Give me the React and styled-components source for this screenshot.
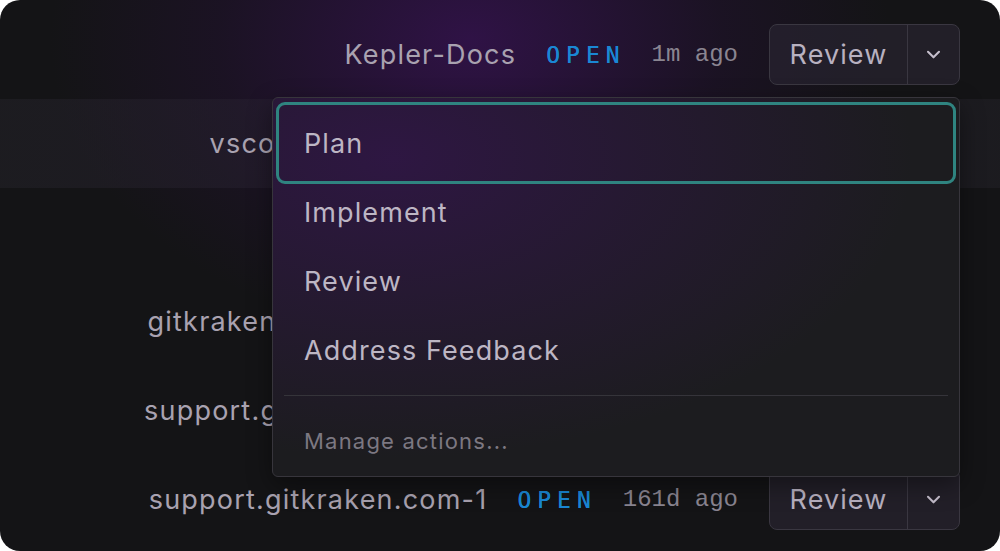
import styled, { createGlobalStyle } from 'styled-components';

const GlobalStyle = createGlobalStyle`
  html, body {
    margin: 0;
    padding: 0;
    background: #ffffff;
  }
  * {
    box-sizing: border-box;
  }
`;

const rows = [
  { name: 'Kepler-Docs', status: 'OPEN', age: '1m ago' },
  { name: 'vscode-gitlens-extras', status: 'OPEN', age: '2h ago', active: true },
  { name: 'gk-cli', status: 'OPEN', age: '5d ago' },
  { name: 'gitkraken-desktop-release', status: 'OPEN', age: '8d ago' },
  { name: 'support.gitkraken.com-2', status: 'OPEN', age: '158d ago' },
  { name: 'support.gitkraken.com-1', status: 'OPEN', age: '161d ago' },
];

const actions = ['Plan', 'Implement', 'Review', 'Address Feedback'];

const Chevron = () => (
  <svg width="15" height="9" viewBox="0 0 15 9" fill="none">
    <path d="M2 1.8l5.5 5.5 5.5-5.5" stroke="#c4bdcb" strokeWidth="2.1" strokeLinecap="round" strokeLinejoin="round" />
  </svg>
);

const App = () => (
  <>
    <GlobalStyle />
    <Panel>
      <List>
        {rows.map(row => (
          <Row key={row.name} active={row.active}>
            <Name>{row.name}</Name>
            <Status>{row.status}</Status>
            <Age>{row.age}</Age>
            <SplitButton>
              <MainAction>Review</MainAction>
              <MenuToggle>
                <Chevron />
              </MenuToggle>
            </SplitButton>
          </Row>
        ))}
      </List>

      <Menu>
        {actions.map((label, i) => (
          <MenuItem key={label} focused={i === 0}>
            {label}
          </MenuItem>
        ))}
        <Divider />
        <ManageItem>Manage actions...</ManageItem>
      </Menu>
    </Panel>
  </>
);

const Panel = styled.div`
  position: relative;
  width: 1000px;
  height: 551px;
  border-radius: 20px;
  overflow: hidden;
  background:
    radial-gradient(ellipse 420px 300px at 470px 40px, rgba(52, 18, 78, 0.85), rgba(40, 16, 60, 0.35) 60%, rgba(20, 20, 22, 0) 100%),
    #141416;
  font-family: Inter, "Noto Sans", sans-serif;
`;

const List = styled.div`
  display: flex;
  flex-direction: column;
  padding-top: 10px;
`;

const Row = styled.div`
  display: flex;
  align-items: center;
  justify-content: flex-end;
  height: 89px;
  padding-right: 40px;
  background: ${props =>
    props.active
      ? 'linear-gradient(90deg, rgba(34, 33, 39, 0.6), rgba(50, 34, 66, 0.35) 50%, rgba(34, 33, 39, 0.55))'
      : 'transparent'};
`;

const Name = styled.span`
  font-size: 27px;
  letter-spacing: 1.2px;
  color: #a9a2b0;
  margin-right: 30px;
  white-space: nowrap;
`;

const Status = styled.span`
  font-family: "DejaVu Sans Mono", monospace;
  font-size: 23px;
  letter-spacing: 6px;
  color: #1a87d4;
  margin-right: 26px;
  text-shadow: 0 0 0.4px #1a87d4;
`;

const Age = styled.span`
  font-family: "Liberation Mono", monospace;
  font-size: 24px;
  color: #8a8591;
  margin-right: 31px;
`;

const SplitButton = styled.div`
  display: flex;
  flex-shrink: 0;
  height: 61px;
  width: 191px;
  border: 1px solid #3a3741;
  border-radius: 8px;
  background: rgba(40, 35, 48, 0.7);
`;

const MainAction = styled.div`
  flex: 1;
  display: flex;
  align-items: center;
  justify-content: center;
  font-size: 27px;
  letter-spacing: 1.1px;
  color: #b8b1c0;
  border-right: 1px solid #3a3741;
`;

const MenuToggle = styled.div`
  width: 51px;
  display: flex;
  align-items: center;
  justify-content: center;
`;

const Menu = styled.div`
  position: absolute;
  left: 272px;
  top: 97px;
  width: 688px;
  height: 380px;
  display: flex;
  flex-direction: column;
  padding: 4px 3px;
  border: 1px solid #37353c;
  border-radius: 6px;
  background:
    radial-gradient(ellipse 520px 300px at 120px 60px, rgba(48, 22, 70, 0.9), rgba(30, 27, 36, 0) 100%),
    #1c1c1f;
  box-shadow: 0 8px 24px rgba(0, 0, 0, 0.4);
`;

const MenuItem = styled.div`
  display: flex;
  align-items: center;
  flex-shrink: 0;
  height: ${props => (props.focused ? '82px' : '69px')};
  margin-bottom: ${props => (props.focused ? '-6px' : '0')};
  padding-left: ${props => (props.focused ? '25px' : '28px')};
  border: ${props => (props.focused ? '3px solid #2f8480' : 'none')};
  border-radius: 9px;
  font-size: 27px;
  letter-spacing: 1.1px;
  color: #bdb6c4;
`;

const Divider = styled.div`
  height: 1px;
  margin: 10px 8px 0;
  background: #35343a;
`;

const ManageItem = styled.div`
  flex: 1;
  display: flex;
  align-items: center;
  padding-left: 28px;
  padding-top: 14px;
  font-size: 22px;
  letter-spacing: 1.2px;
  color: #7c7882;
`;

export default App;
